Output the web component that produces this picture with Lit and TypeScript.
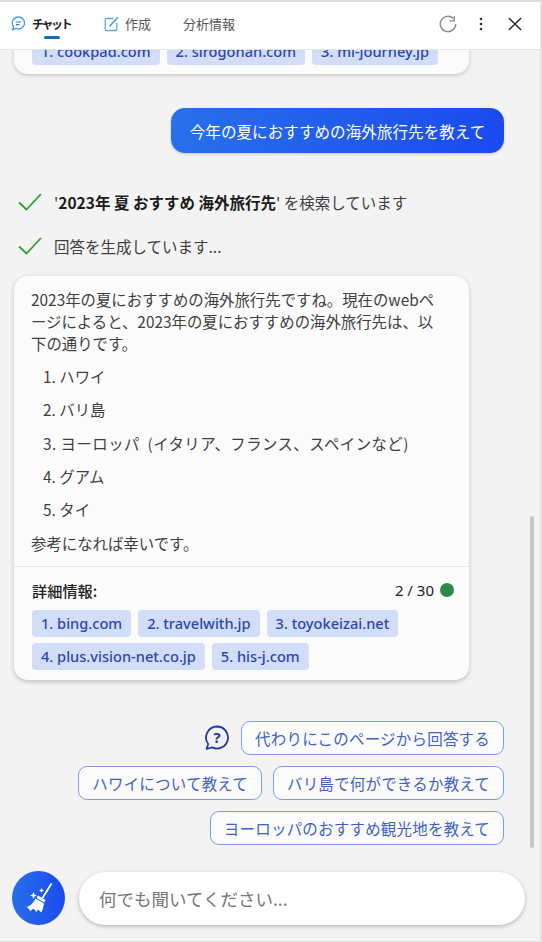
import { LitElement, html, css } from "lit";
import { customElement } from "lit/decorators.js";

const check = html`<svg class="check" viewBox="0 0 24 18" width="24" height="18"><path d="M1 9.5 L8.5 16.5 L23 1" fill="none" stroke="#2ba02f" stroke-width="1.8"/></svg>`;

const chip = (t: string) => html`<span class="chip">${t}</span>`;
const sug = (t: string) => html`<button class="sug">${t}</button>`;

@customElement("app-root")
export class AppRoot extends LitElement {
  static styles = css`
    :host {
      display: flex;
      flex-direction: column;
      width: 542px;
      height: 942px;
      box-sizing: border-box;
      background: #f3f3f3;
      border-top: 2px solid #dcdcdc;
      border-bottom: 1px solid #e2e2e2;
      border-right: 2px solid #e2e2e2;
      overflow: hidden;
      font-family: "Noto Sans CJK JP", "Noto Sans", sans-serif;
      color: #3f3f3f;
      font-size: 15.6px;
      position: relative;
    }
    .head {
      flex: none;
      height: 48px;
      background: #fff;
      border-bottom: 1px solid #e6e6e6;
      box-sizing: border-box;
      display: flex;
      align-items: center;
      padding: 0 18px 4px 11px;
      font-size: 13px;
      color: #555;
      z-index: 1;
    }
    .tab { display: flex; align-items: center; gap: 6px; position: relative; }
    .tab.chat { font-weight: 700; color: #222; width: 93px; font-size: 12px; letter-spacing: -2.4px; }
    .tab.make { width: 79px; }
    .tab.chat::after {
      content: "";
      position: absolute;
      left: 33px;
      top: 21px;
      width: 16px;
      height: 3px;
      border-radius: 2px;
      background: #0f6cbd;
    }
    .spacer { flex: 1; }
    .actions { display: flex; align-items: center; gap: 18px; }
    .main {
      flex: 1;
      min-height: 0;
      overflow: hidden;
      display: flex;
      flex-direction: column;
      justify-content: flex-end;
      padding: 0 36px 0 14px;
    }
    .card {
      flex: none;
      width: 455px;
      box-sizing: border-box;
      background: #fbfbfb;
      border-radius: 14px;
      box-shadow: 0 1.5px 4px rgba(0, 0, 0, 0.2);
    }
    .card.old { padding: 0 17px 9px 18px; margin-bottom: 34px; }
    .chips { display: flex; flex-wrap: wrap; gap: 6px 7px; }
    .chip {
      height: 27px;
      line-height: 26px;
      padding: 0 9px;
      border-radius: 4px;
      background: #d2ddf8;
      color: #2c46b0;
      font-family: "Noto Sans", sans-serif;
      font-size: 14.6px;
      font-weight: 500;
    }
    .user {
      flex: none;
      align-self: flex-end;
      width: 333px;
      height: 45px;
      box-sizing: border-box;
      border-radius: 14px;
      background: linear-gradient(90deg, #2870ea, #1b4aef);
      color: #fff;
      display: flex;
      align-items: center;
      justify-content: center;
      box-shadow: 0 1px 3px rgba(0, 0, 0, 0.2);
    }
    .step {
      flex: none;
      display: flex;
      align-items: center;
      height: 24px;
      margin-left: 4px;
      gap: 12px;
      font-size: 15.5px;
    }
    .step b { color: #1c1c1c; font-weight: 700; }
    .step.first { margin-top: 37px; }
    .step.second { margin-top: 20px; margin-bottom: 18px; }
    .body { padding: 12px 24px 10px 17px; line-height: 22px; font-size: 15.4px; height: 290px; box-sizing: border-box; }
    .body p { margin: 0; }
    .body ol { margin: 6px -12px 6px 0; padding: 0 0 0 12px; list-style: none; }
    .body li { height: 33.3px; line-height: 33.3px; white-space: nowrap; }
    .body li.spaced { letter-spacing: 0.45px; }
    .foot { border-top: 1px solid #e9e9e9; padding: 11px 15px 10px 18px; }
    .foot-top {
      display: flex;
      justify-content: space-between;
      align-items: center;
      height: 24px;
      margin-bottom: 8px;
      font-size: 15.2px;
      color: #222;
    }
    .foot-top b { font-weight: 500; }
    .count { display: flex; align-items: center; gap: 6px; font-family: "Noto Sans", sans-serif; font-size: 15px; }
    .dot { width: 14px; height: 14px; border-radius: 50%; background: #2b8a4b; }
    .sugs {
      flex: none;
      align-self: flex-end;
      margin-top: 41px;
      display: flex;
      flex-direction: column;
      align-items: flex-end;
      gap: 11px;
    }
    .row { display: flex; gap: 11px; align-items: center; }
    .sug {
      height: 34px;
      padding: 0 13px;
      box-sizing: border-box;
      border: 1px solid #7f9be6;
      border-radius: 9px;
      background: #fbfbfb;
      color: #3f62c8;
      font: inherit;
      font-size: 15.5px;
      letter-spacing: 0.2px;
      white-space: nowrap;
    }
    .bar {
      flex: none;
      display: flex;
      align-items: center;
      gap: 14px;
      padding: 26px 15px 16px 12px;
    }
    .broom {
      flex: none;
      width: 53px;
      height: 54px;
      border-radius: 50%;
      background: linear-gradient(90deg, #2870ea, #1b4aef);
      display: flex;
      align-items: center;
      justify-content: center;
    }
    .input {
      flex: 1;
      height: 53px;
      border-radius: 27px;
      background: #fff;
      box-shadow: 0 1.5px 4px rgba(0, 0, 0, 0.25);
      display: flex;
      align-items: center;
      padding-left: 20px;
      font-size: 17.5px;
      color: #767676;
    }
    .scroll {
      position: absolute;
      right: 6px;
      top: 514px;
      width: 4px;
      height: 332px;
      border-radius: 2px;
      background: #c6c6c6;
    }
  `;

  render() {
    return html`
      <div class="head">
        <div class="tab chat">
          <svg width="15" height="15" viewBox="0 0 15 15"><path d="M7.5 1a6 6 0 1 1-2.6 11.4L1.6 13.6l.9-3A6 6 0 0 1 7.5 1Z" fill="none" stroke="#3aa0e8" stroke-width="1.3"/><path d="M5 6h5M5 8.6h3.4" stroke="#3f70c8" stroke-width="1.1"/></svg>
          <span>チャット</span>
        </div>
        <div class="tab make">
          <svg width="15" height="16" viewBox="0 0 15 16"><path d="M9.5 2.5H2.2a1 1 0 0 0-1 1v10a1 1 0 0 0 1 1h9.6a1 1 0 0 0 1-1V7" fill="none" stroke="#5aa9ee" stroke-width="1.3"/><path d="M5.5 10.5 13.8 1.2" stroke="#4f9ae4" stroke-width="1.6"/></svg>
          作成
        </div>
        <div class="tab">分析情報</div>
        <div class="spacer"></div>
        <div class="actions">
          <svg width="18" height="18" viewBox="0 0 20 20"><path d="M16 3.8A8.6 8.6 0 1 0 18.6 10" fill="none" stroke="#8a8a8a" stroke-width="1.5"/><path d="M11.5 6.5h5.5V1" fill="none" stroke="#8a8a8a" stroke-width="1.5"/></svg>
          <svg width="12" height="16" viewBox="0 0 12 16"><circle cx="6" cy="3" r="1.3" fill="#333"/><circle cx="6" cy="8" r="1.3" fill="#333"/><circle cx="6" cy="13" r="1.3" fill="#333"/></svg>
          <svg style="margin-left:3px" width="14" height="14" viewBox="0 0 15 15"><path d="M1 1l13 13M14 1 1 14" stroke="#222" stroke-width="1.5"/></svg>
        </div>
      </div>

      <div class="main">
        <div class="card old">
          <div class="chips">${chip("1. cookpad.com")}${chip("2. sirogohan.com")}${chip("3. mi-journey.jp")}</div>
        </div>
        <div class="user">今年の夏におすすめの海外旅行先を教えて</div>
        <div class="step first">${check}<span>'<b>2023年 夏 おすすめ 海外旅行先</b>' を検索しています</span></div>
        <div class="step second">${check}<span>回答を生成しています...</span></div>
        <div class="card">
          <div class="body">
            <p>2023年の夏におすすめの海外旅行先ですね。現在のwebページによると、2023年の夏におすすめの海外旅行先は、以下の通りです。</p>
            <ol>
              <li>1. ハワイ</li>
              <li>2. バリ島</li>
              <li class="spaced">3. ヨーロッパ&nbsp;&nbsp;(イタリア、フランス、スペインなど)</li>
              <li>4. グアム</li>
              <li>5. タイ</li>
            </ol>
            <p>参考になれば幸いです。</p>
          </div>
          <div class="foot">
            <div class="foot-top"><b>詳細情報:</b><span class="count">2 / 30 <span class="dot"></span></span></div>
            <div class="chips">${chip("1. bing.com")}${chip("2. travelwith.jp")}${chip("3. toyokeizai.net")}${chip("4. plus.vision-net.co.jp")}${chip("5. his-j.com")}</div>
          </div>
        </div>
        <div class="sugs">
          <div class="row">
            <svg width="26" height="26" viewBox="0 0 26 26"><path d="M13 1.5a11 11 0 1 1-4.8 20.9L2.6 24l1.6-5A11 11 0 0 1 13 1.5Z" fill="none" stroke="#1f3e9e" stroke-width="1.8" stroke-linejoin="round"/><text x="13" y="18" text-anchor="middle" font-size="15" font-weight="700" fill="#1f3e9e" font-family="Noto Sans">?</text></svg>
            ${sug("代わりにこのページから回答する")}
          </div>
          <div class="row">${sug("ハワイについて教えて")}${sug("バリ島で何ができるか教えて")}</div>
          <div class="row">${sug("ヨーロッパのおすすめ観光地を教えて")}</div>
        </div>
      </div>

      <div class="bar">
        <div class="broom">
          <svg width="30" height="30" viewBox="0 0 30 30" fill="#fff">
            <path d="M27.5.5 18.5 15" stroke="#fff" stroke-width="1.8" fill="none"/>
            <path d="M14 12.5l7.5 4.6-1.4 2.4-7.6-4.4z"/>
            <path d="M11.5 15.5l8.5 5c-.5 3.5-1.5 6.5-2.5 9l-3.5-3-1.5 2.5-3-3.5-3 2.5-3.5-4c3.5-1 6.5-4.5 8.5-8.5z"/>
            <path d="M9.5 9l1 2.5 2.5 1-2.5 1-1 2.5-1-2.5-2.5-1 2.5-1zM17.5 5l.8 1.700 1.700.8-1.700.8-.8 1.700-.8-1.700-1.700-.8 1.700-.8z"/>
          </svg>
        </div>
        <div class="input">何でも聞いてください...</div>
      </div>
      <div class="scroll"></div>
    `;
  }
}
